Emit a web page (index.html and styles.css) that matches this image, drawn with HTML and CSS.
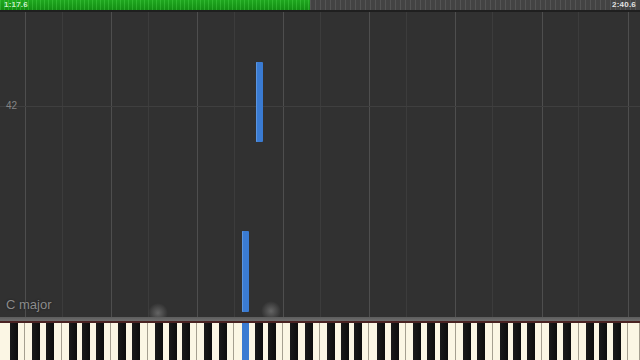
FILE: index.html
```html
<!DOCTYPE html>
<html lang="en">
<head>
  <meta charset="UTF-8">
  <title>Piano Roll</title>
  <link rel="stylesheet" href="styles.css">
</head>
<body>
  <div class="screen">
    <div class="timebar">
      <div class="played"></div>
      <span class="time time-left">1:17.6</span>
      <span class="time time-right">2:40.6</span>
    </div>
    <div class="timebar-edge"></div>

    <div class="field" id="field">
      <div class="hline"></div>
      <span class="row-label">42</span>
      <div class="note" style="left:256px; top:50px; height:80px;"></div>
      <div class="note" style="left:242px; top:219px; height:81px;"></div>
      <span class="key-sig">C major</span>
      <div class="spark spark-a"></div>
      <div class="spark spark-b"></div>
    </div>

    <div class="rail"></div>
    <div class="rail-red"></div>

    <div class="keyboard" id="keyboard"></div>
  </div>

  <script>
    const whiteCount = 52;
    const w = 640 / whiteCount;
    const field = document.getElementById("field");
    const keyboard = document.getElementById("keyboard");

    // octave lines (C) and mid lines (F), piano starts at A0
    for (let i = 0; i < whiteCount; i++) {
      const pos = (i + 5) % 7; // A=0 -> C at i=2
      if (pos === 0 || pos === 3) {
        const line = document.createElement("div");
        line.className = pos === 0 ? "vline vline-c" : "vline vline-f";
        line.style.left = Math.round(i * w) + "px";
        field.prepend(line);
      }
    }

    // white keys
    for (let i = 0; i < whiteCount; i++) {
      const key = document.createElement("div");
      key.className = "white-key";
      keyboard.appendChild(key);
    }

    // black keys: after white index i, by letter (A B C D E F G)
    const letters = "ABCDEFG";
    const shift = { A: 1.2, C: -1.2, D: 0.8, F: -1.2, G: 0 };
    const pressed = 19; // F#3
    for (let i = 0; i < whiteCount - 1; i++) {
      const letter = letters[i % 7];
      if (letter === "B" || letter === "E") continue;
      const key = document.createElement("div");
      key.className = "black-key";
      let left = Math.round((i + 1) * w + shift[letter] - 3.8);
      if (i === pressed) {
        key.classList.add("pressed");
        left = 242;
      }
      key.style.left = left + "px";
      keyboard.appendChild(key);
    }
  </script>
</body>
</html>
```

FILE: styles.css
```css
:root {
  --field: #313131;
  --note: #3a7bd2;
  --cream: #fbf6e4;
}

body {
  margin: 0;
  background: #000;
  font-family: "Liberation Sans", Arial, sans-serif;
  overflow: hidden;
}

.screen {
  width: 640px;
  height: 360px;
  display: flex;
  flex-direction: column;
  overflow: hidden;
}

.timebar {
  height: 10px;
  flex-shrink: 0;
  position: relative;
  background:
    repeating-linear-gradient(90deg, rgba(255,255,255,0.09) 0 1px, transparent 1px 5px),
    #434343;
}

.played {
  width: 310px;
  height: 100%;
  background:
    repeating-linear-gradient(90deg, rgba(120,255,120,0.22) 0 1px, transparent 1px 4px),
    linear-gradient(#1fa81f, #138d13);
}

.time {
  position: absolute;
  top: 1px;
  font-size: 8px;
  line-height: 8px;
  font-weight: bold;
  letter-spacing: 0.2px;
}

.time-left { left: 4px; color: #c9f0c9; }
.time-right { right: 4px; color: #e2e2e2; }

.timebar-edge {
  height: 2px;
  flex-shrink: 0;
  background: #1f1f1f;
}

.field {
  flex: 1;
  position: relative;
  background: var(--field);
  overflow: hidden;
}

.vline {
  position: absolute;
  top: 0;
  bottom: 0;
  width: 1px;
}

.vline-c { background: #4e4e4e; }
.vline-f { background: #3c3c3c; }

.hline {
  position: absolute;
  left: 0;
  right: 0;
  top: 94px;
  height: 1px;
  background: #3f3f3f;
}

.row-label {
  position: absolute;
  left: 6px;
  top: 88px;
  font-size: 10px;
  color: #858585;
}

.note {
  position: absolute;
  width: 7px;
  background: var(--note);
  border-radius: 1px;
  box-shadow: inset 1px 0 0 #5b95e0;
}

.key-sig {
  position: absolute;
  left: 6px;
  bottom: 5px;
  font-size: 13px;
  color: #8c8c8c;
  text-shadow: 0 0 2px #1a1a1a;
}

.spark {
  position: absolute;
  width: 20px;
  height: 20px;
  border-radius: 50%;
  background: radial-gradient(circle, rgba(220,220,220,0.3), rgba(220,220,220,0) 70%);
}

.spark-a { left: 148px; bottom: -6px; }
.spark-b { left: 261px; bottom: -4px; }

.rail {
  height: 4px;
  flex-shrink: 0;
  background: linear-gradient(#5c5c5c, #6e6e6e);
}

.rail-red {
  height: 2px;
  flex-shrink: 0;
  background: #4a2222;
}

.keyboard {
  height: 37px;
  flex-shrink: 0;
  position: relative;
  display: flex;
  background: #8a8478;
}

.white-key {
  flex: 1;
  background: var(--cream);
  box-shadow: inset -1px 0 0 #a59f90;
}

.black-key {
  position: absolute;
  top: 0;
  bottom: 0;
  width: 8px;
  background: linear-gradient(90deg, #1a1a1a, #0d0d0d);
}

.black-key.pressed {
  width: 7px;
  background: var(--note);
}
```
